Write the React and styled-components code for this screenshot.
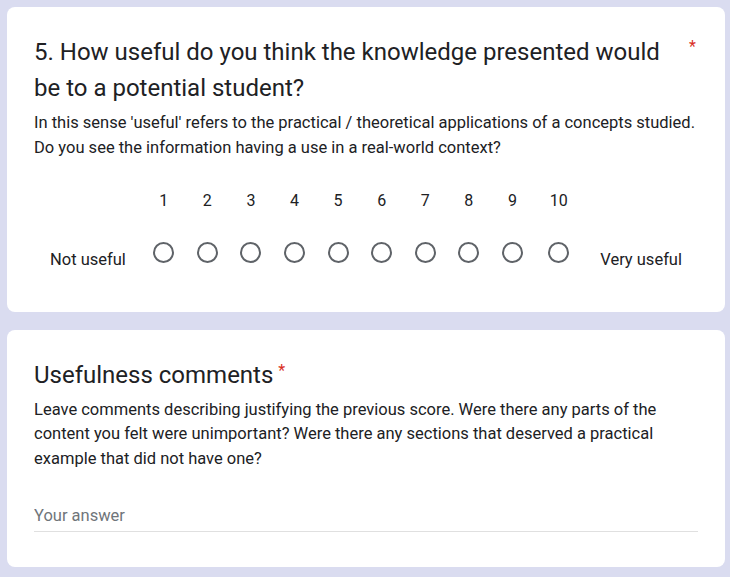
import React from 'react';
import styled, { createGlobalStyle } from 'styled-components';

// -- Global
const GlobalStyle = createGlobalStyle`
  html, body {
    margin: 0;
    padding: 0;
    background: #dadcf0;
  }
  body {
    font-family: Roboto, "Noto Sans", Arial, sans-serif;
    color: #202124;
  }
`;

// -- Styled components
const Page = styled.div`
  display: flex;
  flex-direction: column;
  gap: 18px;
  padding: 7px 5px 11px 7px;
`;

const Card = styled.section`
  background: #fff;
  border-radius: 8px;
  padding: 27px 27px 35px;
`;

const Header = styled.div`
  display: flex;
  align-items: flex-start;
`;

const Title = styled.h2`
  flex: 1;
  margin: 0;
  font-size: 24px;
  line-height: 36px;
  font-weight: 400;
  color: #202124;
`;

const RequiredMark = styled.span`
  display: inline-block;
  vertical-align: top;
  color: #d93025;
  font-size: 16px;
  line-height: 16px;
  margin-top: ${(p) => (p.inline ? '6px' : '5px')};
  margin-left: ${(p) => (p.inline ? '5px' : '24px')};
  margin-right: ${(p) => (p.inline ? '0' : '2px')};
`;

const Description = styled.p`
  margin: 5px 0 0;
  font-size: 16.5px;
  line-height: 24.5px;
  color: #202124;
`;

const Scale = styled.div`
  display: flex;
  justify-content: center;
  align-items: flex-end;
  margin-top: 29px;
`;

const EndLabel = styled.span`
  font-size: 16.5px;
  line-height: 24px;
  white-space: nowrap;
  padding-bottom: 5px;
  margin: ${(p) => (p.end ? '0 0 0 17px' : '0 16px 0 0')};
`;

const ScaleColumn = styled.label`
  display: flex;
  flex-direction: column;
  align-items: center;
  width: ${(p) => (p.wide ? '49px' : '43.6px')};
  flex-shrink: 0;
  cursor: pointer;
`;

const ScaleNumber = styled.span`
  font-size: 16px;
  line-height: 24px;
  margin-bottom: 15.5px;
`;

const RadioCell = styled.span`
  display: flex;
  align-items: center;
  justify-content: center;
  height: 48px;
`;

const Radio = styled.span`
  width: 21px;
  height: 21px;
  box-sizing: border-box;
  border: 2px solid #5f6368;
  border-radius: 50%;
`;

const AnswerInput = styled.input`
  display: block;
  width: 100%;
  box-sizing: border-box;
  margin-top: 32px;
  padding: 0 0 4px;
  border: none;
  border-bottom: 1px solid #e0e0e0;
  font-family: inherit;
  font-size: 16.5px;
  line-height: 24px;
  height: 29px;
  color: #202124;
  outline: none;
  background: transparent;

  &::placeholder {
    color: #70757a;
  }
`;
//---------------------------------------

const points = [1, 2, 3, 4, 5, 6, 7, 8, 9, 10];

const App = () => {
  return (
    <>
      <GlobalStyle />
      <Page>
        <Card>
          <Header>
            <Title>5. How useful do you think the knowledge presented would be to a potential student?</Title>
            <RequiredMark>*</RequiredMark>
          </Header>
          <Description>
            In this sense 'useful' refers to the practical / theoretical applications of a concepts studied. Do you
            see the information having a use in a real-world context?
          </Description>
          <Scale>
            <EndLabel>Not useful</EndLabel>
            {points.map((n) => (
              <ScaleColumn key={n} wide={n > 9}>
                <ScaleNumber>{n}</ScaleNumber>
                <RadioCell>
                  <Radio />
                </RadioCell>
              </ScaleColumn>
            ))}
            <EndLabel end>Very useful</EndLabel>
          </Scale>
        </Card>
        <Card>
          <Title>
            Usefulness comments<RequiredMark inline>*</RequiredMark>
          </Title>
          <Description>
            Leave comments describing justifying the previous score. Were there any parts of the content you felt were
            unimportant? Were there any sections that deserved a practical example that did not have one?
          </Description>
          <AnswerInput placeholder="Your answer" />
        </Card>
      </Page>
    </>
  );
};

export default App;
